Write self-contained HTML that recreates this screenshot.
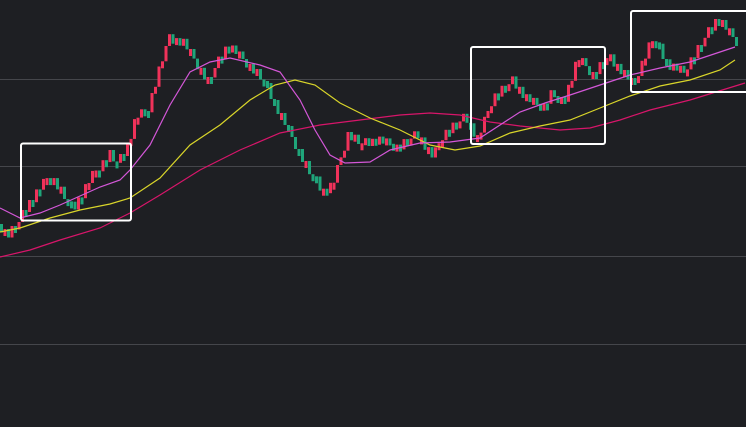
<!DOCTYPE html>
<html><head><meta charset="utf-8"><style>
html,body{margin:0;padding:0;background:#1e1f23;overflow:hidden}
svg{display:block}
</style></head><body>
<svg id="s" width="746" height="427" viewBox="0 0 746 427" xmlns="http://www.w3.org/2000/svg">
<rect width="746" height="427" fill="#1e1f23"/>
<g stroke="#45464b" stroke-width="1">
<line x1="0" y1="79.5" x2="746" y2="79.5"/>
<line x1="0" y1="166.5" x2="746" y2="166.5"/>
<line x1="0" y1="256.5" x2="746" y2="256.5"/>
<line x1="0" y1="344.5" x2="746" y2="344.5"/>
</g>
<g id="c"></g>
<polyline fill="none" stroke="#d8156a" stroke-width="1.2" points="0,257 30,250 60,240 100,228 130,213 160,195 200,170 240,150 280,133 320,125 360,120 400,115 430,113 460,115 490,122 520,126 560,130 590,128 620,120 650,110 690,100 745,83"/>
<polyline fill="none" stroke="#d9d52a" stroke-width="1.2" points="0,232 20,228 50,218 80,210 110,204 130,198 160,178 190,145 220,125 250,100 275,85 295,80 315,85 340,103 370,118 400,130 430,145 455,150 480,146 510,133 540,126 570,120 600,108 630,96 660,86 690,80 720,70 735,60"/>
<polyline fill="none" stroke="#d457d8" stroke-width="1.2" points="0,208 20,218 40,213 60,205 80,196 100,187 120,180 130,170 150,145 170,105 190,72 210,62 230,58 260,65 280,72 300,100 315,130 330,155 345,163 370,162 390,150 420,143 450,142 480,138 500,125 520,112 545,103 570,95 600,85 630,75 660,68 690,62 720,52 735,47"/>
<g fill="none" stroke="#ffffff" stroke-width="2">
<rect x="21" y="143.5" width="110" height="77" rx="2"/>
<rect x="471" y="47" width="134" height="97" rx="2"/>
<rect x="631" y="11" width="120" height="81" rx="2"/>
</g>
</svg>
<script>
(function(){
var k=[[0,225],[10,235],[20,225],[30,205],[52,175],[75,210],[95,175],[112,155],[120,165],[130,145],[138,118],[150,110],[160,75],[170,40],[185,42],[210,82],[230,45],[245,60],[265,80],[290,130],[310,170],[325,192],[335,185],[350,135],[365,145],[380,140],[400,148],[420,135],[435,158],[445,135],[468,118],[480,140],[495,98],[515,82],[530,100],[545,108],[555,92],[565,105],[580,58],[595,75],[610,58],[625,72],[635,85],[655,38],[670,65],[685,72],[700,50],[720,18],[738,42]];
function f(x){for(var i=0;i<k.length-1;i++){if(x<=k[i+1][0]){var t=(x-k[i][0])/(k[i+1][0]-k[i][0]);return k[i][1]+t*(k[i+1][1]-k[i][1]);}}return k[k.length-1][1];}
var nz=[0,5,-2,4,-4,3,0,-5,4,-2,5,-3,2,-4];
var g=document.getElementById('c'),prev=f(0),h='',n=0;
for(var x=0;x<738;x+=3.5){n++;var c=f(x+3.5)+nz[n%nz.length];var yt=Math.min(prev,c),hh=Math.max(7,Math.abs(c-prev));var col=c<prev?'#f0325a':'#1fa57a';
h+='<rect x="'+x.toFixed(1)+'" y="'+(yt-1).toFixed(1)+'" width="3" height="'+hh.toFixed(1)+'" fill="'+col+'"/>';prev=c;}
g.innerHTML=h;
})();
</script>
</body></html>
